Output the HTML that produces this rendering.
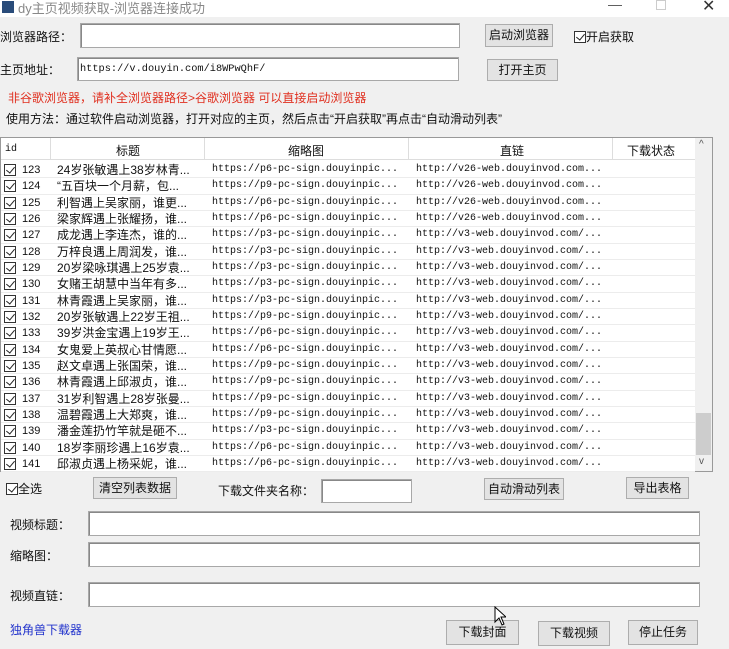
<!DOCTYPE html><html><head><meta charset="utf-8"><style>
*{box-sizing:border-box;margin:0;padding:0}
body{width:729px;height:649px;background:#f0f0f0;font-family:"Liberation Sans","Noto Sans CJK SC",sans-serif;font-size:12px;color:#111;position:relative;overflow:hidden}
.a{position:absolute;white-space:nowrap}
.in{position:absolute;background:#fff;border:1px solid #a8a8a8;box-shadow:inset 1px 1px 0 #888}
.bt{position:absolute;background:#e3e3e3;border:1px solid #adadad;text-align:center;font-size:12px}
.cb{display:inline-block;width:12px;height:12px;border:1px solid #333;background:#fff;position:relative;vertical-align:-2px}
.cb:after{content:"";position:absolute;left:3px;top:0px;width:4px;height:7px;border:solid #222;border-width:0 1.5px 1.5px 0;transform:rotate(40deg)}
.mono{font-family:"Liberation Mono",monospace;font-size:10px}
.row{position:absolute;left:1px;width:694px;height:16.33px;border-bottom:1px solid #ececec;line-height:16px}
.row>i{position:absolute;top:0;font-style:normal}
.row>b{position:absolute;top:2px;left:3px}
</style></head><body>
<div class="a" style="left:0;top:0;width:729px;height:17px;background:#fff"></div>
<div class="a" style="left:2px;top:1px;width:12px;height:12px;background:#2a4c7a"></div>
<div class="a" style="left:18px;top:-2px;color:#888;font-size:13px">dy主页视频获取-浏览器连接成功</div>
<div class="a" style="left:608px;top:-4px;color:#555;font-size:14px">—</div>
<div class="a" style="left:656px;top:0;width:10px;height:10px;border:1px solid #ccc"></div>
<div class="a" style="left:702px;top:-4px;color:#333;font-size:16px">✕</div>

<div class="a" style="left:0;top:28px;font-size:12px">浏览器路径：</div>
<div class="in" style="left:80px;top:23px;width:380px;height:25px"></div>
<div class="bt" style="left:485px;top:24px;width:68px;height:23px;line-height:21px">启动浏览器</div>
<div class="a" style="left:574px;top:28px;font-size:12px"><span class="cb"></span>开启获取</div>

<div class="a" style="left:0;top:61px;font-size:12px">主页地址：</div>
<div class="in" style="left:77px;top:57px;width:382px;height:24px"></div>
<div class="a mono" style="left:80px;top:63px;font-size:10.3px">https://v.douyin.com/i8WPwQhF/</div>
<div class="bt" style="left:487px;top:59px;width:71px;height:22px;line-height:20px">打开主页</div>

<div class="a" style="left:8px;top:89px;color:#e03020;font-size:12px">非谷歌浏览器，请补全浏览器路径&gt;谷歌浏览器 可以直接启动浏览器</div>
<div class="a" style="left:6px;top:110px;font-size:12px">使用方法：通过软件启动浏览器，打开对应的主页，然后点击“开启获取”再点击“自动滑动列表”</div>

<div class="a" style="left:0;top:137px;width:713px;height:335px;background:#fff;border:1px solid #999"></div>
<div class="a" style="left:1px;top:138px;width:694px;height:22px;border-bottom:1px solid #ddd"></div>
<div class="a mono" style="left:5px;top:144px">id</div>
<div class="a" style="left:116px;top:142px">标题</div>
<div class="a" style="left:288px;top:142px">缩略图</div>
<div class="a" style="left:500px;top:142px">直链</div>
<div class="a" style="left:627px;top:142px">下载状态</div>
<div class="a" style="left:50px;top:138px;width:1px;height:22px;background:#ddd"></div>
<div class="a" style="left:204px;top:138px;width:1px;height:22px;background:#ddd"></div>
<div class="a" style="left:408px;top:138px;width:1px;height:22px;background:#ddd"></div>
<div class="a" style="left:612px;top:138px;width:1px;height:22px;background:#ddd"></div>
<div class="a" style="left:695px;top:138px;width:17px;height:333px;background:#f0f0f0"></div>
<div class="a" style="left:699px;top:139px;font-size:10px;color:#555">^</div>
<div class="a" style="left:696px;top:413px;width:15px;height:42px;background:#cdcdcd"></div>
<div class="a" style="left:699px;top:456px;font-size:10px;color:#555">v</div>
<div id="rows"></div>
<script>
var t=["24岁张敏遇上38岁林青...","“五百块一个月薪，包...","利智遇上吴家丽，谁更...","梁家辉遇上张耀扬，谁...","成龙遇上李连杰，谁的...","万梓良遇上周润发，谁...","20岁梁咏琪遇上25岁袁...","女赌王胡慧中当年有多...","林青霞遇上吴家丽，谁...","20岁张敏遇上22岁王祖...","39岁洪金宝遇上19岁王...","女鬼爱上英叔心甘情愿...","赵文卓遇上张国荣，谁...","林青霞遇上邱淑贞，谁...","31岁利智遇上28岁张曼...","温碧霞遇上大郑爽，谁...","潘金莲扔竹竿就是砸不...","18岁李丽珍遇上16岁袁...","邱淑贞遇上杨采妮，谁..."];
var p="6966333339669999366";
var h="";
for(var i=0;i<19;i++){var y=162+16.33*i;h+='<div class="row" style="top:'+y+'px"><b class="cb"></b><i style="left:21px;font-size:11px">'+(123+i)+'</i><i style="left:56px">'+t[i]+'</i><i class="mono" style="left:211px">https://p'+p[i]+'-pc-sign.douyinpic...</i><i class="mono" style="left:415px">http://'+(i<4?'v26-web.douyinvod.com...':'v3-web.douyinvod.com/...')+'</i></div>';}
document.getElementById('rows').innerHTML=h;
</script>

<div class="a" style="left:6px;top:480px;font-size:12px"><span class="cb"></span>全选</div>
<div class="bt" style="left:93px;top:477px;width:84px;height:22px;line-height:20px">清空列表数据</div>
<div class="a" style="left:218px;top:482px">下载文件夹名称：</div>
<div class="in" style="left:321px;top:479px;width:91px;height:24px"></div>
<div class="bt" style="left:484px;top:478px;width:80px;height:22px;line-height:20px">自动滑动列表</div>
<div class="bt" style="left:626px;top:477px;width:63px;height:22px;line-height:20px">导出表格</div>

<div class="a" style="left:10px;top:516px">视频标题：</div>
<div class="in" style="left:88px;top:511px;width:612px;height:25px"></div>
<div class="a" style="left:10px;top:547px">缩略图：</div>
<div class="in" style="left:88px;top:542px;width:612px;height:25px"></div>
<div class="a" style="left:10px;top:587px">视频直链：</div>
<div class="in" style="left:88px;top:582px;width:612px;height:25px"></div>

<div class="a" style="left:10px;top:621px;color:#2233cc">独角兽下载器</div>
<div class="bt" style="left:446px;top:620px;width:73px;height:25px;line-height:23px">下载封面</div>
<div class="bt" style="left:538px;top:621px;width:72px;height:25px;line-height:23px">下载视频</div>
<div class="bt" style="left:628px;top:620px;width:70px;height:25px;line-height:23px">停止任务</div>
<svg class="a" style="left:494px;top:606px" width="12" height="20"><path d="M1 1 L1 16 L5 12 L8 19 L10 18 L7 11 L12 11 Z" fill="#fff" stroke="#000"/></svg>
</body></html>
